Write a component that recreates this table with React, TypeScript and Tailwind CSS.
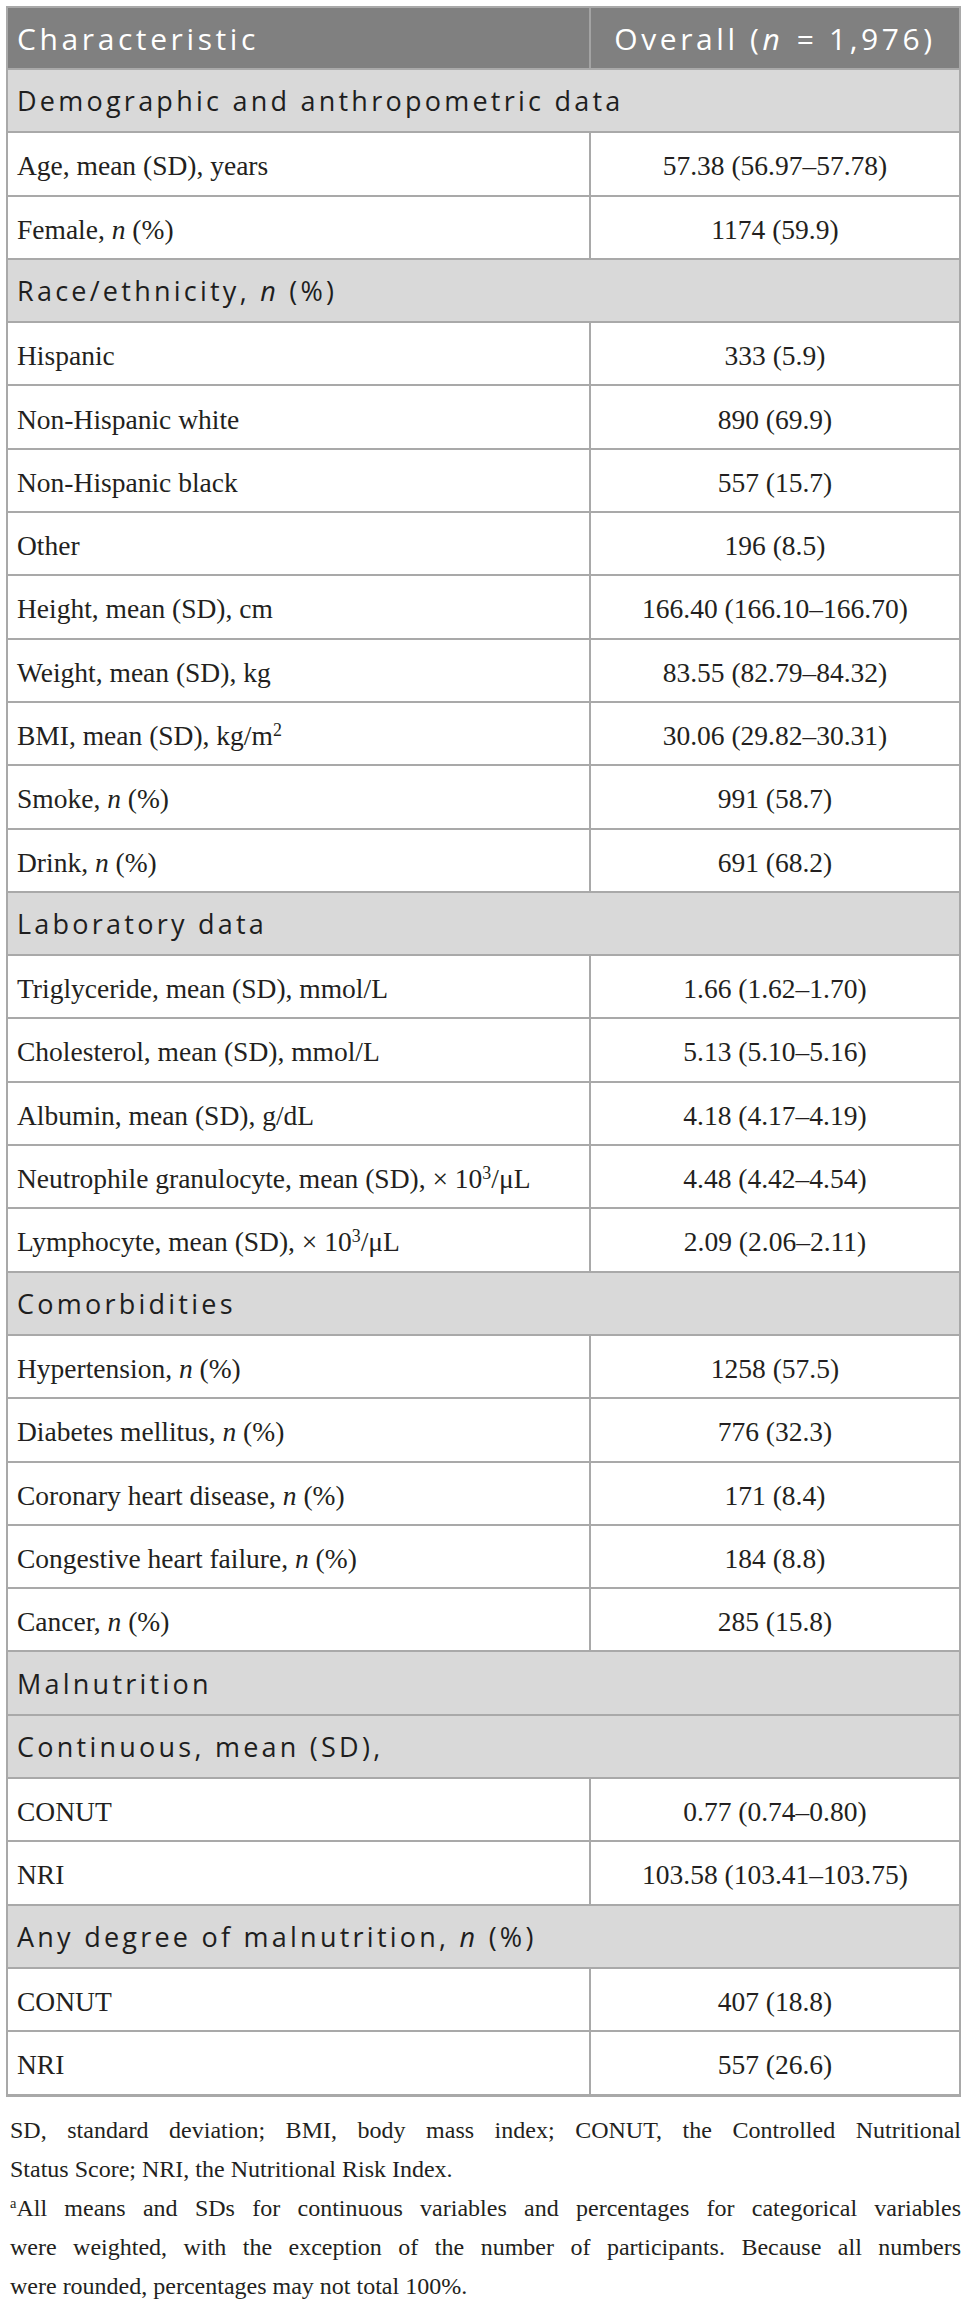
import type { ReactNode } from 'react'

const serif = "font-['Liberation_Serif','Times_New_Roman',serif]"
const sans = "font-['Open_Sans','Noto_Sans',sans-serif]"

type Row = { section: true; label: ReactNode } | { section?: false; label: ReactNode; value: string }

const N = () => <i>n</i>
const Sup = ({ children }: { children: ReactNode }) => <sup className="text-[0.65em]">{children}</sup>

const rows: Row[] = [
  { section: true, label: 'Demographic and anthropometric data' },
  { label: 'Age, mean (SD), years', value: '57.38 (56.97–57.78)' },
  { label: <>Female, <N /> (%)</>, value: '1174 (59.9)' },
  { section: true, label: <>Race/ethnicity, <N /> (%)</> },
  { label: 'Hispanic', value: '333 (5.9)' },
  { label: 'Non-Hispanic white', value: '890 (69.9)' },
  { label: 'Non-Hispanic black', value: '557 (15.7)' },
  { label: 'Other', value: '196 (8.5)' },
  { label: 'Height, mean (SD), cm', value: '166.40 (166.10–166.70)' },
  { label: 'Weight, mean (SD), kg', value: '83.55 (82.79–84.32)' },
  { label: <>BMI, mean (SD), kg/m<Sup>2</Sup></>, value: '30.06 (29.82–30.31)' },
  { label: <>Smoke, <N /> (%)</>, value: '991 (58.7)' },
  { label: <>Drink, <N /> (%)</>, value: '691 (68.2)' },
  { section: true, label: 'Laboratory data' },
  { label: 'Triglyceride, mean (SD), mmol/L', value: '1.66 (1.62–1.70)' },
  { label: 'Cholesterol, mean (SD), mmol/L', value: '5.13 (5.10–5.16)' },
  { label: 'Albumin, mean (SD), g/dL', value: '4.18 (4.17–4.19)' },
  { label: <>Neutrophile granulocyte, mean (SD), × 10<Sup>3</Sup>/μL</>, value: '4.48 (4.42–4.54)' },
  { label: <>Lymphocyte, mean (SD), × 10<Sup>3</Sup>/μL</>, value: '2.09 (2.06–2.11)' },
  { section: true, label: 'Comorbidities' },
  { label: <>Hypertension, <N /> (%)</>, value: '1258 (57.5)' },
  { label: <>Diabetes mellitus, <N /> (%)</>, value: '776 (32.3)' },
  { label: <>Coronary heart disease, <N /> (%)</>, value: '171 (8.4)' },
  { label: <>Congestive heart failure, <N /> (%)</>, value: '184 (8.8)' },
  { label: <>Cancer, <N /> (%)</>, value: '285 (15.8)' },
  { section: true, label: 'Malnutrition' },
  { section: true, label: 'Continuous, mean (SD),' },
  { label: 'CONUT', value: '0.77 (0.74–0.80)' },
  { label: 'NRI', value: '103.58 (103.41–103.75)' },
  { section: true, label: <>Any degree of malnutrition, <N /> (%)</> },
  { label: 'CONUT', value: '407 (18.8)' },
  { label: 'NRI', value: '557 (26.6)' },
]

export default function App() {
  return (
    <div className="w-[967px] bg-white pt-[6px] text-[#231f20]">
      <div className="ml-[6px] w-[955px] border-x-2 border-t-2 border-b-[3px] border-[#a9a9a9]">
        <div className={`flex h-[60px] bg-[#808080] text-white text-[30px] tracking-[0.12em] ${sans}`}>
          <div className="w-[583px] border-r-2 border-[#a3a3a3] pl-[9px] flex items-center">
            <span>Characteristic</span>
          </div>
          <div className="flex-1 flex items-center justify-center">
            <span>
              Overall (<i className="pr-[2px]">n</i> = 1,976)
            </span>
          </div>
        </div>
        {rows.map((row, i) =>
          row.section ? (
            <div
              key={i}
              className={`flex h-[63.3px] items-center border-t-2 border-[#a9a9a9] bg-[#d9d9d9] pl-[9px] pt-[2px] text-[27px] tracking-[0.12em] text-[#1e1e1e] ${sans}`}
            >
              <span>{row.label}</span>
            </div>
          ) : (
            <div key={i} className={`flex h-[63.3px] border-t-2 border-[#a9a9a9] text-[27.5px] ${serif}`}>
              <div className="w-[583px] border-r-2 border-[#a9a9a9] pl-[9px] pt-[4px] flex items-center">
                <span>{row.label}</span>
              </div>
              <div className="flex-1 flex items-center justify-center pt-[4px]">
                <span>{row.value}</span>
              </div>
            </div>
          ),
        )}
      </div>
      <div className={`px-[10px] pr-[6px] pt-[14px] text-[24px] leading-[39px] text-[#231f20] ${serif}`}>
        <p className="text-justify [text-align-last:justify]">
          SD, standard deviation; BMI, body mass index; CONUT, the Controlled Nutritional
        </p>
        <p>Status Score; NRI, the Nutritional Risk Index.</p>
        <p className="text-justify [text-align-last:justify]">
          <sup className="text-[0.6em]">a</sup>All means and SDs for continuous variables and percentages for categorical variables
        </p>
        <p className="text-justify [text-align-last:justify]">
          were weighted, with the exception of the number of participants. Because all numbers
        </p>
        <p>were rounded, percentages may not total 100%.</p>
      </div>
    </div>
  )
}
